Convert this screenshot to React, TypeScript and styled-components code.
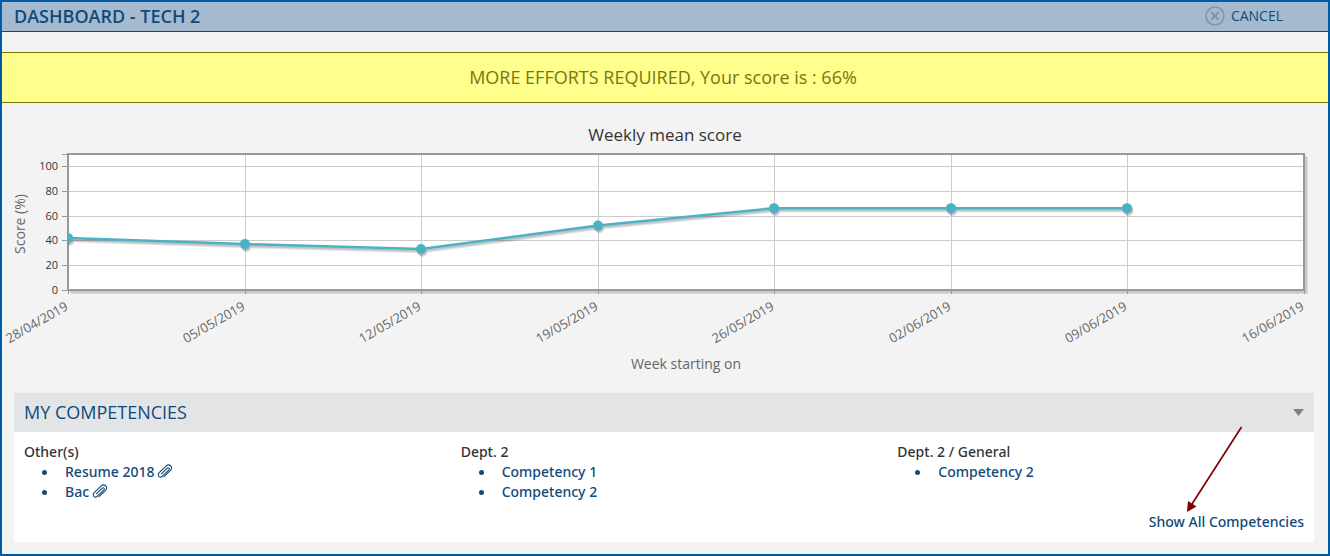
import React, { useLayoutEffect, useRef, useState } from "react";
import styled, { createGlobalStyle } from "styled-components";

const GlobalStyle = createGlobalStyle`
  *, *::before, *::after { box-sizing: border-box; }
  html { height: 100%; }
  body {
    margin: 0;
    height: 100%;
    font-family: "Open Sans", "Noto Sans", sans-serif;
    font-size: 14px;
    line-height: 20px;
    color: #333;
    background: #f3f3f3;
  }
  #root { height: 100%; }
`;

const Frame = styled.div`
  min-height: 100%;
  border: 2px solid #005aa6;
  background: #f3f3f3;
  padding-bottom: 12px;
`;

const Header = styled.header`
  display: flex;
  align-items: flex-start;
  justify-content: space-between;
  height: 30px;
  padding: 0 45px 0 12px;
  background: #a5bacf;
  border-bottom: 1px solid #104a7b;
`;

const PageTitle = styled.h1`
  margin: 0;
  font-size: 18px;
  line-height: 28px;
  font-weight: 600;
  color: #104a7b;
`;

const CancelButton = styled.button`
  display: flex;
  align-items: center;
  gap: 6px;
  padding: 0;
  border: 0;
  background: none;
  color: #104a7b;
  font: inherit;
  line-height: 28px;
  cursor: pointer;
`;

const Banner = styled.div`
  margin-top: 20px;
  padding-right: 4px;
  height: 51px;
  line-height: 49px;
  border: solid #777700;
  border-width: 1px 0;
  background: #ffff8c;
  color: #777711;
  font-size: 18px;
  text-align: center;
`;

const ChartSection = styled.section`
  display: flex;
  flex-direction: column;
  margin-bottom: 16px;
`;

const ChartTitle = styled.h2`
  margin: 0;
  padding-top: 20px;
  height: 46px;
  font-size: 17px;
  line-height: 24px;
  font-weight: 400;
  text-align: center;
`;

const Plot = styled.div`
  height: 228px;
  overflow: hidden;
`;

const ChartSvg = styled.svg`
  display: block;
  width: 100%;
  height: 100%;
`;

const ValueLabel = styled.text`
  font-size: 11px;
  fill: #333;
  text-anchor: end;
`;

const DateLabel = styled.text`
  font-size: 13px;
  fill: #666;
  text-anchor: end;
`;

const AxisLabel = styled.text`
  font-size: 14px;
  fill: #666;
  text-anchor: middle;
`;

const Panel = styled.section`
  position: relative;
  margin: 0 14px 0 12px;
  background: #fff;
`;

const PanelHeader = styled.button`
  display: flex;
  align-items: center;
  justify-content: space-between;
  width: 100%;
  height: 39px;
  padding: 0 10px 1px;
  border: 0;
  background: #e2e4e6;
  color: #104a7b;
  font: inherit;
  font-size: 18px;
  cursor: pointer;
`;

const PanelBody = styled.div`
  display: flex;
  flex-direction: column;
  gap: 10px;
  padding: 10px;
  font-family: "Noto Sans", "Open Sans", sans-serif;
`;

const Groups = styled.div`
  display: grid;
  grid-template-columns: repeat(3, 1fr);
  gap: 30px;
`;

const GroupTitle = styled.h3`
  margin: 0;
  font-size: 14px;
  line-height: 20px;
  font-weight: 500;
`;

const Items = styled.ul`
  margin: 0;
  padding: 0 0 0 18px;
  list-style: none;
  color: #104a7b;
`;

const Item = styled.li`
  display: flex;
  align-items: center;
  height: 20px;

  &::before {
    content: "";
    width: 5px;
    height: 5px;
    margin-right: 18px;
    border-radius: 50%;
    background: #104a7b;
  }
`;

const Link = styled.a`
  display: inline-flex;
  align-items: center;
  gap: 3px;
  color: #104a7b;
  font-weight: 500;
  text-decoration: none;
`;

const PanelFooter = styled.div`
  display: flex;
  justify-content: flex-end;
`;

const Pointer = styled.svg`
  position: absolute;
  right: 70px;
  top: 32px;
  pointer-events: none;
`;

const CloseIcon = () => (
  <svg width="20" height="20" viewBox="0 0 20 20" fill="none" stroke="#8296a9" aria-hidden="true">
    <circle cx="10" cy="10" r="9" strokeWidth="1.7" />
    <path d="M6.3 6.3l7.4 7.4M13.7 6.3l-7.4 7.4" strokeWidth="2.2" />
  </svg>
);

const ClipIcon = () => (
  <svg width="16" height="16" viewBox="0 0 16 16" fill="none" stroke="#104a7b" strokeWidth="1.1" strokeLinecap="round" strokeLinejoin="round" aria-hidden="true">
    <path d="M7 12.7L13.3 6.7C14.8 5.2 15 3.2 13.8 2C12.5 0.7 10.5 0.7 9 2.1L2.2 8.7C1 9.9 1 11.5 1.9 12.4C2.9 13.4 4.4 13.3 5.5 12.2L11.7 6.1C12.4 5.4 12.5 4.6 12 4.1C11.5 3.6 10.7 3.7 10 4.4L4.4 9.9" />
  </svg>
);

const DATES = [
  "28/04/2019", "05/05/2019", "12/05/2019", "19/05/2019",
  "26/05/2019", "02/06/2019", "09/06/2019", "16/06/2019",
];
const SCORES = [42, 37, 33, 52, 66, 66, 66];
const TICKS = [0, 20, 40, 60, 80, 100];
const LEFT = 66;
const RIGHT = 24;
const TOP = 5;
const BOTTOM = 141;

function ScoreChart() {
  const box = useRef<HTMLDivElement>(null);
  const [width, setWidth] = useState(1000);

  useLayoutEffect(() => {
    const el = box.current;
    if (!el) return;
    const measure = () => setWidth(el.clientWidth);
    measure();
    const observer = new ResizeObserver(measure);
    observer.observe(el);
    return () => observer.disconnect();
  }, []);

  const right = width - RIGHT;
  const xAt = (i: number) => Math.round(LEFT + ((right - LEFT) * i) / (DATES.length - 1));
  const yAt = (v: number) => BOTTOM - v * 1.24;
  const points = SCORES.map((s, i) => `${xAt(i)},${yAt(s)}`).join(" ");

  return (
    <Plot ref={box}>
      <ChartSvg role="img" aria-label="Weekly mean score">
        <defs>
          <clipPath id="plot-area">
            <rect x={LEFT} y={TOP} width={right - LEFT} height={BOTTOM - TOP} />
          </clipPath>
        </defs>
        <g fill="none" stroke="#000" strokeOpacity="0.09">
          {[1, 2, 3].map((d) => (
            <path key={d} strokeWidth="2" d={`M${right + d} ${TOP + d}V${BOTTOM + d}H${LEFT + d}`} />
          ))}
        </g>
        <rect x={LEFT} y={TOP} width={right - LEFT} height={BOTTOM - TOP} fill="#fff" />
        <g fill="none" stroke="#ccc" shapeRendering="crispEdges">
          {TICKS.slice(1).map((t) => (
            <path key={t} d={`M${LEFT} ${Math.round(yAt(t)) + 0.5}H${right}`} />
          ))}
          {DATES.map((d, i) => (
            <path key={d} d={`M${xAt(i) + 0.5} ${TOP}V${BOTTOM}`} />
          ))}
        </g>
        <g stroke="#999" shapeRendering="crispEdges">
          {TICKS.map((t) => (
            <path key={t} d={`M${LEFT - 6} ${Math.round(yAt(t)) + 0.5}h6`} />
          ))}
          <path d={`M${LEFT - 6} ${TOP + 0.5}h6`} />
          {DATES.map((d, i) => (
            <path key={d} d={`M${xAt(i) + 0.5} ${BOTTOM}v4`} />
          ))}
        </g>
        <rect x={LEFT} y={TOP} width={right - LEFT} height={BOTTOM - TOP} fill="none" stroke="#999" strokeWidth="2" />
        <g clipPath="url(#plot-area)">
          {[1, 2, 3].map((d) => (
            <g key={d} transform={`translate(${d / 2} ${d})`} opacity="0.1">
              <polyline points={points} fill="none" stroke="#000" strokeWidth="2.5" />
              {SCORES.map((s, i) => (
                <circle key={i} cx={xAt(i)} cy={yAt(s)} r="5" />
              ))}
            </g>
          ))}
          <polyline points={points} fill="none" stroke="#4bb2c5" strokeWidth="2.5" strokeLinejoin="round" />
          {SCORES.map((s, i) => (
            <circle key={i} cx={xAt(i)} cy={yAt(s)} r="5" fill="#4bb2c5" />
          ))}
        </g>
        {TICKS.map((t) => (
          <ValueLabel key={t} x={LEFT - 10} y={Math.round(yAt(t)) + 4}>{t}</ValueLabel>
        ))}
        {DATES.map((d, i) => (
          <DateLabel key={d} transform={`translate(${xAt(i) + 1} 160) rotate(-30)`}>{d}</DateLabel>
        ))}
        <AxisLabel transform="translate(23 75) rotate(-90)">Score (%)</AxisLabel>
        <AxisLabel x={(LEFT + right) / 2} y="220">Week starting on</AxisLabel>
      </ChartSvg>
    </Plot>
  );
}

const GROUPS = [
  { title: "Other(s)", items: [{ name: "Resume 2018", file: true }, { name: "Bac", file: true }] },
  { title: "Dept. 2", items: [{ name: "Competency 1", file: false }, { name: "Competency 2", file: false }] },
  { title: "Dept. 2 / General", items: [{ name: "Competency 2", file: false }] },
];

export default function App() {
  const [open, setOpen] = useState(true);
  return (
    <>
      <GlobalStyle />
      <Frame>
        <Header>
          <PageTitle>DASHBOARD - TECH 2</PageTitle>
          <CancelButton type="button">
            <CloseIcon />
            CANCEL
          </CancelButton>
        </Header>
        <main>
          <Banner role="status">MORE EFFORTS REQUIRED, Your score is : 66%</Banner>
          <ChartSection>
            <ChartTitle>Weekly mean score</ChartTitle>
            <ScoreChart />
          </ChartSection>
          <Panel>
            <PanelHeader type="button" aria-expanded={open} onClick={() => setOpen(!open)}>
              MY COMPETENCIES
              <svg width="11" height="7" viewBox="0 0 11 7" aria-hidden="true">
                <path d="M0 0h11L5.5 7z" fill="#808080" />
              </svg>
            </PanelHeader>
            {open && (
              <PanelBody>
                <Groups>
                  {GROUPS.map((g) => (
                    <div key={g.title}>
                      <GroupTitle>{g.title}</GroupTitle>
                      <Items>
                        {g.items.map((it) => (
                          <Item key={it.name}>
                            <Link href="#">
                              {it.name}
                              {it.file && <ClipIcon />}
                            </Link>
                          </Item>
                        ))}
                      </Items>
                    </div>
                  ))}
                </Groups>
                <PanelFooter>
                  <Link href="#">Show All Competencies</Link>
                </PanelFooter>
              </PanelBody>
            )}
            <Pointer width="60" height="90" viewBox="0 0 60 90" aria-hidden="true">
              <path d="M57.5 2L8 79" stroke="#800000" strokeWidth="1.7" />
              <path d="M3 87L4 76L12.5 81.5z" fill="#800000" />
            </Pointer>
          </Panel>
        </main>
      </Frame>
    </>
  );
}
